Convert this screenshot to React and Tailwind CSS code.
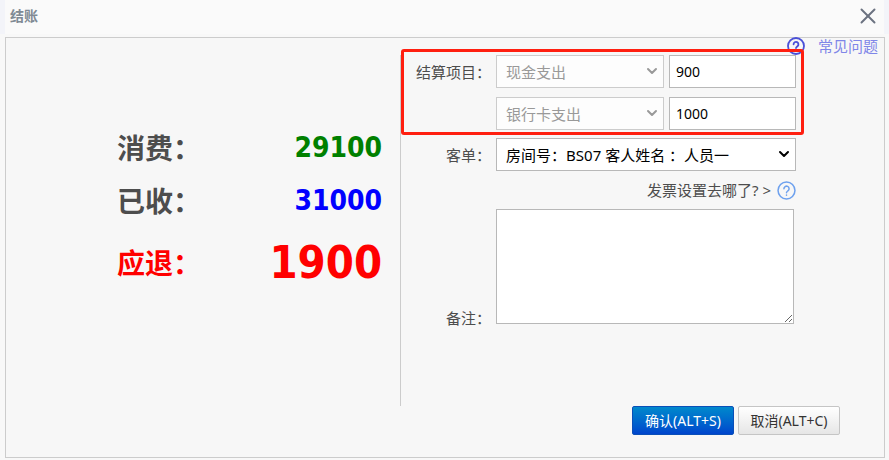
import { useState } from 'react';
import { X, ChevronDown } from 'lucide-react';

const totals = [
  { label: '消费：', value: '29100', row: 'h-[53px] text-[#4d4d4d]', amount: 'text-[28px] text-[#008000]' },
  { label: '已收：', value: '31000', row: 'h-[53px] text-[#4d4d4d]', amount: 'text-[28px] text-[#0000ff]' },
  { label: '应退：', value: '1900', row: 'h-[72px] text-[#ff0000]', amount: 'text-[45px] text-[#ff0000]' },
];

const payments = [
  { id: 'cash', name: '现金支出', amount: '900' },
  { id: 'bank', name: '银行卡支出', amount: '1000' },
];

function HelpIcon({ className, strokeWidth }) {
  return (
    <svg
      className={className}
      viewBox="0 0 20 20"
      fill="none"
      stroke="currentColor"
      strokeWidth={strokeWidth}
      strokeLinecap="round"
      strokeLinejoin="round"
      aria-hidden="true"
    >
      <circle cx="10" cy="10" r="8.9" />
      <path d="M7.3 8.1a2.7 2.7 0 1 1 4.4 2.1c-.9.7-1.7 1.1-1.7 2.1" />
      <path d="M10 14.8v.1" />
    </svg>
  );
}

function Select({ id, label, disabled, children }) {
  return (
    <div className="relative">
      <select
        id={id}
        aria-label={label}
        disabled={disabled}
        className="block h-[33px] w-full appearance-none border border-[#b8b8b8] bg-white pr-7 pl-[9px] text-[15px] text-black disabled:border-[#cccccc] disabled:bg-[#fdfdfd] disabled:text-[#999999] disabled:opacity-100"
      >
        {children}
      </select>
      <ChevronDown
        size={16}
        strokeWidth={3}
        className={`pointer-events-none absolute top-2 right-1 ${disabled ? 'text-[#999999]' : 'text-black'}`}
      />
    </div>
  );
}

export default function App() {
  const [amounts, setAmounts] = useState(
    Object.fromEntries(payments.map((p) => [p.id, p.amount]))
  );
  const [remark, setRemark] = useState('');

  return (
    <div className="flex min-h-screen flex-col bg-[#f8f8f8] font-['Noto_Sans','Noto_Sans_CJK_SC',sans-serif] text-[15px] leading-5 text-[#4d4d4d]">
      {/* TITLE BAR */}
      <header className="bg-[#f3f4f9] px-[5px]">
        <div className="flex h-[34px] items-center justify-between bg-[#fafafa] pr-[3px] pb-0.5 pl-[5px]">
          <h1 className="text-sm font-bold text-[#808a94]">结账</h1>
          <button type="button" aria-label="关闭" className="text-[#6b7280]">
            <X size={26} strokeWidth={1.8} />
          </button>
        </div>
      </header>

      <main className="relative mt-[3px] mr-1 mb-0.5 ml-[5px] grid flex-1 grid-cols-[45%_1fr] border border-[#cccccc] bg-[#f7f7f7]">
        <a href="#faq" className="absolute -top-px right-1.5 flex items-center gap-[13px] leading-4 text-[#7f86e8]">
          <HelpIcon className="size-[18px] text-[#4a50d8]" strokeWidth={2} />
          常见问题
        </a>

        {/* TOTALS */}
        <section className="mt-[17px] mb-[51px] border-r border-[#cccccc] pt-[66px] pr-[18px] pl-[111px] font-bold">
          {totals.map((t) => (
            <div key={t.label} className={`flex items-center justify-between ${t.row}`}>
              <span className="text-[28px] leading-9">{t.label}</span>
              <span className={`font-['DejaVu_Sans_Condensed','DejaVu_Sans',sans-serif] leading-9 ${t.amount}`}>
                {t.value}
              </span>
            </div>
          ))}
        </section>

        {/* FORM */}
        <form className="flex flex-col pt-[17px] pl-[15px]" onSubmit={(e) => e.preventDefault()}>
          <div className="relative flex w-[380px] flex-col gap-[9px]">
            {payments.map((p, i) => (
              <div key={p.id} className="flex items-center gap-[5px]">
                <label htmlFor={`type-${p.id}`} className="w-[75px] text-right">
                  {i === 0 ? '结算项目：' : ''}
                </label>
                <div className="w-[168px]">
                  <Select id={`type-${p.id}`} label="结算项目" disabled>
                    <option>{p.name}</option>
                  </Select>
                </div>
                <input
                  id={`amount-${p.id}`}
                  type="text"
                  aria-label={p.name}
                  value={amounts[p.id]}
                  onChange={(e) => setAmounts({ ...amounts, [p.id]: e.target.value })}
                  className="h-[33px] w-[127px] border border-[#b8b8b8] bg-white px-1.5 text-sm text-black"
                />
              </div>
            ))}
            <div className="pointer-events-none absolute -top-1.5 -right-2 -bottom-[5px] -left-[15px] rounded-[3px] border-3 border-[#ff1f10]" />
          </div>

          <div className="mt-2 grid w-[380px] grid-cols-[75px_1fr] gap-x-[5px]">
            <label htmlFor="guest" className="self-center text-right">客单：</label>
            <Select id="guest">
              <option>房间号：BS07 客人姓名 ：人员一</option>
            </Select>

            <a href="#invoice" className="col-start-2 flex h-[38px] items-center justify-end gap-1.5">
              <span>发票设置去哪了? &gt;</span>
              <HelpIcon className="size-[19px] text-[#6ea1ee]" strokeWidth={1.6} />
            </a>

            <label htmlFor="remark" className="self-end text-right leading-3">备注：</label>
            <textarea
              id="remark"
              value={remark}
              onChange={(e) => setRemark(e.target.value)}
              className="mr-0.5 block h-[115px] resize border border-[#b8b8b8] bg-white p-2 text-black"
            />
          </div>

          <div className="mt-auto mr-11 mb-[22px] flex justify-end gap-1 text-sm">
            <button
              type="submit"
              className="h-[29px] w-[102px] rounded-xs border border-[#0a4fb8] bg-linear-to-b from-[#0088cc] to-[#0044cc] text-white"
            >
              确认(ALT+S)
            </button>
            <button
              type="button"
              className="h-[29px] w-[102px] rounded-xs border border-[#c5c5c5] bg-linear-to-b from-white to-[#e6e6e6] text-[#333333]"
            >
              取消(ALT+C)
            </button>
          </div>
        </form>
      </main>
    </div>
  );
}
